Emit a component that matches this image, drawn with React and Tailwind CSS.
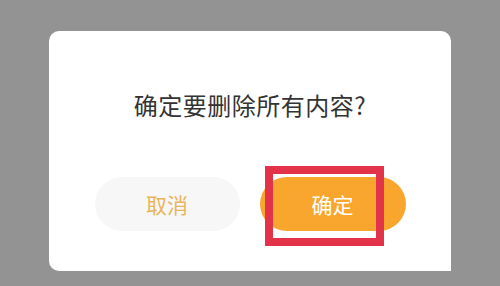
import React from 'react';

const font = { fontFamily: '"Noto Sans CJK SC", "Noto Sans", sans-serif' };

export default function App() {
  return (
    <div className="w-[500px] h-[286px] bg-[#939393] flex justify-center pt-[31px]" style={font}>
      {/* Dialog */}
      <div className="w-[402px] h-[240px] bg-white rounded-[10px] rounded-br-none flex flex-col items-center">
        <div className="mt-[61px] text-[24px] leading-[26px] text-[#333333] tracking-[0.5px]">
          确定要删除所有内容?
        </div>
        <div className="mt-[59px] flex gap-[20px]">
          <button className="w-[145px] h-[54px] rounded-full bg-[#f7f7f7] text-[#e9b55b] text-[21px] leading-none">
            取消
          </button>
          <div className="relative">
            <button className="w-[146px] h-[54px] rounded-full bg-[#f9a62f] text-white text-[21px] leading-none">
              确定
            </button>
            {/* red highlight box */}
            <div className="absolute left-[5px] top-[-11px] w-[119px] h-[80px] border-[8px] border-[#e2334a]" />
          </div>
        </div>
      </div>
    </div>
  );
}
